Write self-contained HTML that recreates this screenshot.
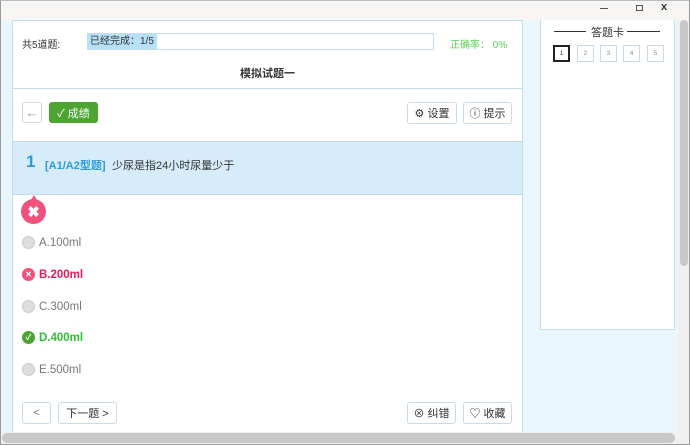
<!DOCTYPE html>
<html><head><meta charset="utf-8"><style>
*{box-sizing:border-box;margin:0;padding:0}
body{width:690px;height:445px;overflow:hidden;font-family:"Liberation Sans","Noto Sans CJK SC",sans-serif;font-size:11px;color:#333;background:#eaf6fd;position:relative}
.abs{position:absolute}
.win{left:0;top:0;width:690px;height:445px;border:1px solid #9a9a9a;border-top-color:#bbb}
.title{left:1px;top:1px;width:688px;height:19px;background:#f7f6f5}
.btn{position:absolute;border:1px solid #c9dbe9;border-radius:3px;background:#fff;height:22px;display:flex;align-items:center;justify-content:center;font-size:11px;color:#333}
.opt{position:absolute;left:22px;display:flex;align-items:center;font-size:11.5px;color:#777}
.rad{width:13px;height:13px;border-radius:50%;background:#ddd;border:1px solid #ccc;margin-right:4px}
.num{position:absolute;top:45px;width:17px;height:17px;border:1px solid #c9dbe9;font-size:6px;color:#888;display:flex;align-items:center;justify-content:center}
</style></head><body>
<div class="abs title"></div>
<div class="abs" style="left:600px;top:8px;width:8px;height:1px;background:#555"></div>
<div class="abs" style="left:636px;top:5px;width:7px;height:6px;border:1px solid #555"></div>
<div class="abs" style="left:661px;top:1px;font-size:11px;font-weight:bold;color:#333">x</div>

<div class="abs" style="left:12px;top:20px;width:511px;height:420px;background:#fff;border-left:1px solid #c5dcec;border-right:1px solid #c5dcec;border-top:1px solid #c5dcec"></div>
<div class="abs" style="left:22px;top:36px;font-size:10px">共5道题:</div>
<div class="abs" style="left:87px;top:33px;width:347px;height:17px;border:1px solid #c5dcec"></div>
<div class="abs" style="left:88px;top:34px;width:69px;height:15px;background:#b7e1f8;font-size:10px;padding-left:2px;line-height:15px">已经完成：1/5</div>
<div class="abs" style="left:450px;top:36px;font-size:10px;color:#5ad25a">正确率： 0%</div>
<div class="abs" style="left:240px;top:65px;font-size:11px;font-weight:bold">模拟试题一</div>
<div class="abs" style="left:13px;top:88px;width:509px;height:1px;background:#c5dcec"></div>

<div class="btn" style="left:22px;top:102px;width:20px;height:21px;color:#999;font-size:13px">&#8592;</div>
<div class="btn" style="left:49px;top:102px;width:49px;height:21px;background:#4ca531;border-color:#4ca531;color:#fff">&#10003; 成绩</div>
<div class="btn" style="left:407px;top:102px;width:50px;height:22px">⚙ 设置</div>
<div class="btn" style="left:463px;top:102px;width:49px;height:22px">ⓘ 提示</div>

<div class="abs" style="left:13px;top:141px;width:509px;height:54px;background:#d6ecfa;border-top:1px solid #c5dcec;border-bottom:1px solid #c5dcec"></div>
<div class="abs" style="left:26px;top:152px;font-size:17px;font-weight:bold;color:#2a9be0">1</div>
<div class="abs" style="left:45px;top:157px;font-size:11px;font-weight:bold;color:#2a9be0">[A1/A2型题]</div>
<div class="abs" style="left:112px;top:157px;font-size:11px">少尿是指24小时尿量少于</div>

<div class="abs" style="left:31px;top:195px;width:0;height:0;border-left:3px solid transparent;border-right:3px solid transparent;border-bottom:5px solid #f0527d"></div>
<div class="abs" style="left:21px;top:199px;width:25px;height:25px;border-radius:50%;background:#f0527d;color:#fff;font-size:15px;font-weight:bold;display:flex;align-items:center;justify-content:center">✖</div>

<div class="opt" style="top:236px"><div class="rad"></div>A.100ml</div>
<div class="opt" style="top:268px;color:#f0185a;font-weight:bold"><div class="rad" style="background:#f0527d;border-color:#f0527d;color:#fff;font-size:8px;display:flex;align-items:center;justify-content:center">✕</div>B.200ml</div>
<div class="opt" style="top:300px"><div class="rad"></div>C.300ml</div>
<div class="opt" style="top:331px;color:#2fc22f;font-weight:bold"><div class="rad" style="background:#4ca531;border-color:#4ca531;color:#fff;font-size:8px;display:flex;align-items:center;justify-content:center">✓</div>D.400ml</div>
<div class="opt" style="top:363px"><div class="rad"></div>E.500ml</div>

<div class="btn" style="left:22px;top:402px;width:29px;color:#777">&lt;</div>
<div class="btn" style="left:58px;top:402px;width:59px">下一题 &gt;</div>
<div class="btn" style="left:407px;top:402px;width:49px">⊗ 纠错</div>
<div class="btn" style="left:463px;top:402px;width:49px">♡ 收藏</div>

<div class="abs" style="left:540px;top:20px;width:135px;height:310px;background:#fff;border:1px solid #c5dcec;border-top:none"></div>
<div class="abs" style="left:554px;top:31px;width:32px;height:1px;background:#333"></div>
<div class="abs" style="left:591px;top:24px;font-size:11px">答题卡</div>
<div class="abs" style="left:627px;top:31px;width:33px;height:1px;background:#333"></div>
<div class="num" style="left:553px;border:2px solid #222;color:#333">1</div>
<div class="num" style="left:577px">2</div>
<div class="num" style="left:600px">3</div>
<div class="num" style="left:623px">4</div>
<div class="num" style="left:647px">5</div>

<div class="abs" style="left:678px;top:20px;width:11px;height:424px;background:#f0f0f0"></div>
<div class="abs" style="left:680px;top:20px;width:8px;height:246px;background:#c8c8c8;border-radius:4px"></div>
<div class="abs" style="left:1px;top:432px;width:677px;height:12px;background:#f0f0f0"></div>
<div class="abs" style="left:2px;top:433px;width:673px;height:10px;background:#c8c8c8;border-radius:5px"></div>
<div class="abs win"></div>
</body></html>
